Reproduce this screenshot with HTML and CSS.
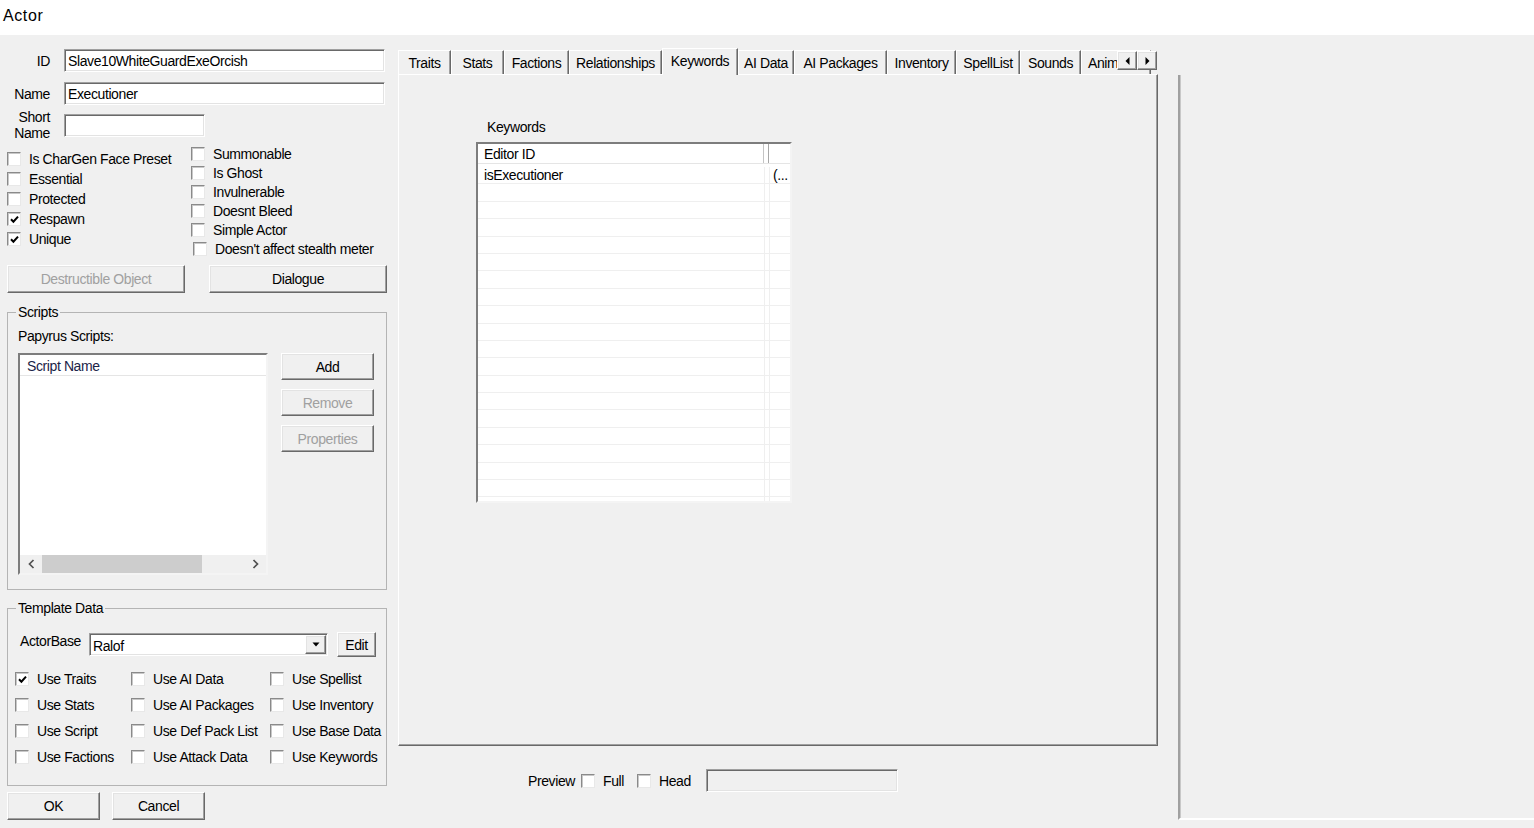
FILE: index.html
```html
<!DOCTYPE html>
<html>
<head>
<meta charset="utf-8">
<title>Actor</title>
<link rel="stylesheet" href="styles.css">
</head>
<body>
<div class="titlebar">Actor</div>
<div class="window">
  <div class="left">
    <div class="frow r1"><span class="flabel">ID</span><div class="edit w321">Slave10WhiteGuardExeOrcish</div></div>
    <div class="frow r2"><span class="flabel">Name</span><div class="edit w321">Executioner</div></div>
    <div class="frow r3"><span class="flabel">Short<br>Name</span><div class="edit w141"></div></div>

    <div class="flags">
      <div class="fcol fcol1">
        <div class="cb"><span class="box"></span>Is CharGen Face Preset</div>
        <div class="cb"><span class="box"></span>Essential</div>
        <div class="cb"><span class="box"></span>Protected</div>
        <div class="cb"><span class="box"><svg width="9" height="9" viewBox="0 0 9 9"><path d="M1 4.3 L3.4 6.7 L8 1.6" fill="none" stroke="#000" stroke-width="2"/></svg></span>Respawn</div>
        <div class="cb"><span class="box"><svg width="9" height="9" viewBox="0 0 9 9"><path d="M1 4.3 L3.4 6.7 L8 1.6" fill="none" stroke="#000" stroke-width="2"/></svg></span>Unique</div>
      </div>
      <div class="fcol fcol2">
        <div class="cb"><span class="box"></span>Summonable</div>
        <div class="cb"><span class="box"></span>Is Ghost</div>
        <div class="cb"><span class="box"></span>Invulnerable</div>
        <div class="cb"><span class="box"></span>Doesnt Bleed</div>
        <div class="cb"><span class="box"></span>Simple Actor</div>
        <div class="cb shift2"><span class="box"></span>Doesn't affect stealth meter</div>
      </div>
    </div>

    <div class="btnrow">
      <div class="btn dis wbig">Destructible Object</div>
      <div class="btn wbig">Dialogue</div>
    </div>

    <fieldset class="group scripts">
      <legend>Scripts</legend>
      <div class="ptitle">Papyrus Scripts:</div>
      <div class="srow">
        <div class="sunken slist">
          <div class="lhead">Script Name</div>
          <div class="lbody"></div>
          <div class="hscroll">
            <span class="harr"><svg width="7" height="10" viewBox="0 0 7 10"><path d="M5.5 1 L1.5 5 L5.5 9" fill="none" stroke="#505050" stroke-width="1.7"/></svg></span>
            <span class="thumb"></span>
            <span class="hspace"></span>
            <span class="harr"><svg width="7" height="10" viewBox="0 0 7 10"><path d="M1.5 1 L5.5 5 L1.5 9" fill="none" stroke="#505050" stroke-width="1.7"/></svg></span>
          </div>
        </div>
        <div class="sbtns">
          <div class="btn">Add</div>
          <div class="btn dis">Remove</div>
          <div class="btn dis">Properties</div>
        </div>
      </div>
    </fieldset>

    <fieldset class="group tmpl">
      <legend>Template Data</legend>
      <div class="abrow">
        <span class="ablabel">ActorBase</span>
        <div class="edit combo"><span class="ctext">Ralof</span><span class="btn ddbtn"><svg width="8" height="5" viewBox="0 0 8 5"><path d="M0.5 0.5 H7.5 L4 4.5 Z" fill="#000"/></svg></span></div>
        <div class="btn editbtn">Edit</div>
      </div>
      <div class="tgrid">
        <div class="cb"><span class="box"><svg width="9" height="9" viewBox="0 0 9 9"><path d="M1 4.3 L3.4 6.7 L8 1.6" fill="none" stroke="#000" stroke-width="2"/></svg></span>Use Traits</div>
        <div class="cb"><span class="box"></span>Use AI Data</div>
        <div class="cb"><span class="box"></span>Use Spellist</div>
        <div class="cb"><span class="box"></span>Use Stats</div>
        <div class="cb"><span class="box"></span>Use AI Packages</div>
        <div class="cb"><span class="box"></span>Use Inventory</div>
        <div class="cb"><span class="box"></span>Use Script</div>
        <div class="cb"><span class="box"></span>Use Def Pack List</div>
        <div class="cb"><span class="box"></span>Use Base Data</div>
        <div class="cb"><span class="box"></span>Use Factions</div>
        <div class="cb"><span class="box"></span>Use Attack Data</div>
        <div class="cb"><span class="box"></span>Use Keywords</div>
      </div>
    </fieldset>

    <div class="okrow">
      <div class="btn okbtn">OK</div>
      <div class="btn okbtn cancel">Cancel</div>
    </div>
  </div>

  <div class="mid">
    <div class="tabstrip">
      <div class="tab t-traits">Traits</div>
      <div class="tab t-stats">Stats</div>
      <div class="tab t-factions">Factions</div>
      <div class="tab t-rel">Relationships</div>
      <div class="tab sel t-kw">Keywords</div>
      <div class="tab t-ai">AI Data</div>
      <div class="tab t-aip">AI Packages</div>
      <div class="tab t-inv">Inventory</div>
      <div class="tab t-spell">SpellList</div>
      <div class="tab t-sounds">Sounds</div>
      <div class="tab t-anim">Animation</div>
      <div class="tabarrows">
        <div class="btn tarr"><svg width="5" height="8" viewBox="0 0 5 8"><path d="M4.5 0 L0.5 4 L4.5 8 Z" fill="#000"/></svg></div>
        <div class="btn tarr"><svg width="5" height="8" viewBox="0 0 5 8"><path d="M0.5 0 L4.5 4 L0.5 8 Z" fill="#000"/></svg></div>
      </div>
    </div>
    <div class="panel">
      <div class="klabel">Keywords</div>
      <div class="sunken klist">
        <div class="khead"><span class="kh1">Editor ID</span><span class="kh2"></span><span class="kh3"></span></div>
        <div class="kbody">
          <div class="krow"><span class="kc1">isExecutioner</span><span class="kc2"></span><span class="kc3">(...</span></div>
          <div class="krow"><span class="kc1"></span><span class="kc2"></span><span class="kc3"></span></div>
          <div class="krow"><span class="kc1"></span><span class="kc2"></span><span class="kc3"></span></div>
          <div class="krow"><span class="kc1"></span><span class="kc2"></span><span class="kc3"></span></div>
          <div class="krow"><span class="kc1"></span><span class="kc2"></span><span class="kc3"></span></div>
          <div class="krow"><span class="kc1"></span><span class="kc2"></span><span class="kc3"></span></div>
          <div class="krow"><span class="kc1"></span><span class="kc2"></span><span class="kc3"></span></div>
          <div class="krow"><span class="kc1"></span><span class="kc2"></span><span class="kc3"></span></div>
          <div class="krow"><span class="kc1"></span><span class="kc2"></span><span class="kc3"></span></div>
          <div class="krow"><span class="kc1"></span><span class="kc2"></span><span class="kc3"></span></div>
          <div class="krow"><span class="kc1"></span><span class="kc2"></span><span class="kc3"></span></div>
          <div class="krow"><span class="kc1"></span><span class="kc2"></span><span class="kc3"></span></div>
          <div class="krow"><span class="kc1"></span><span class="kc2"></span><span class="kc3"></span></div>
          <div class="krow"><span class="kc1"></span><span class="kc2"></span><span class="kc3"></span></div>
          <div class="krow"><span class="kc1"></span><span class="kc2"></span><span class="kc3"></span></div>
          <div class="krow"><span class="kc1"></span><span class="kc2"></span><span class="kc3"></span></div>
          <div class="krow"><span class="kc1"></span><span class="kc2"></span><span class="kc3"></span></div>
          <div class="krow"><span class="kc1"></span><span class="kc2"></span><span class="kc3"></span></div>
          <div class="krow"><span class="kc1"></span><span class="kc2"></span><span class="kc3"></span></div>
          <div class="krow"><span class="kc1"></span><span class="kc2"></span><span class="kc3"></span></div>
        </div>
      </div>
    </div>
    <div class="prev">
      <span>Preview</span>
      <span class="box pbox1"></span>
      <span>Full</span>
      <span class="box pbox2"></span>
      <span>Head</span>
      <div class="edit pinput"></div>
    </div>
  </div>

  <div class="side"></div>
</div>
</body>
</html>
```

FILE: styles.css
```css
* { box-sizing: border-box; }
html, body { margin: 0; padding: 0; }
body {
  width: 1534px;
  height: 828px;
  overflow: hidden;
  background: #f0f0f0;
  font-family: "Liberation Sans", Arial, sans-serif;
  font-size: 14px;
  letter-spacing: -0.4px;
  color: #000;
}

.titlebar {
  height: 35px;
  background: #fff;
  padding: 7px 0 0 3px;
  font-size: 16px;
  line-height: 18px;
  letter-spacing: 0.6px;
}

.window { display: flex; height: 793px; }

/* ---------- left column ---------- */
.left { width: 380px; margin-left: 7px; padding-top: 14px; flex: none; }

.frow { display: flex; align-items: center; }
.r1 { height: 23px; }
.r2 { height: 23px; margin-top: 10px; }
.r3 { height: 32px; margin-top: 4px; }
.flabel { width: 43px; margin-right: 14px; text-align: right; line-height: 16px; }

.edit {
  height: 23px;
  background: #fff;
  border: 1px solid;
  border-color: #a0a0a0 #fff #fff #a0a0a0;
  box-shadow: inset 1px 1px 0 #696969, inset -1px -1px 0 #e3e3e3;
  padding: 0 3px;
  line-height: 22px;
  white-space: nowrap;
  overflow: hidden;
}
.w321 { width: 321px; }
.w141 { width: 141px; }

.flags { display: flex; margin-top: 3px; }
.fcol1 { width: 184px; padding-top: 5px; }
.fcol1 .cb { height: 20px; }
.fcol2 .cb { height: 19px; }
.cb { display: flex; align-items: center; white-space: nowrap; }
.shift2 { margin-left: 2px; }

.box {
  width: 14px;
  height: 14px;
  flex: none;
  margin-right: 8px;
  background: #fff;
  border: 1px solid;
  border-color: #8a8a8a #e8e8e8 #e8e8e8 #8a8a8a;
  box-shadow: inset 1px 1px 0 #c8c8c8;
  display: flex;
  align-items: center;
  justify-content: center;
}

.btn {
  height: 28px;
  display: flex;
  align-items: center;
  justify-content: center;
  background: #f0f0f0;
  border: 1px solid;
  border-color: #fff #696969 #696969 #fff;
  box-shadow: inset -1px -1px 0 #a0a0a0, inset 1px 1px 0 #e3e3e3;
  white-space: nowrap;
}
.btn.dis { color: #a0a0a0; }
.wbig { width: 178px; }
.btnrow { display: flex; justify-content: space-between; margin-top: 7px; }

.group {
  margin: 0;
  padding: 0;
  border: 1px solid #b4b4b4;
  width: 380px;
  min-width: 0;
}
.group legend { margin-left: 8px; padding: 0 2px; line-height: 16px; }
.scripts { margin-top: 11px; padding-bottom: 14px; }
.tmpl { margin-top: 10px; padding-bottom: 15px; }

.ptitle { margin: 8px 0 0 10px; line-height: 16px; }
.srow { display: flex; margin-top: 9px; }

.sunken {
  background: #fff;
  border: 2px solid;
  border-color: #7d7d7d #f4f4f4 #f4f4f4 #7d7d7d;
}
.slist { margin-left: 10px; width: 250px; height: 222px; display: flex; flex-direction: column; }
.lhead {
  height: 21px;
  line-height: 22px;
  padding-left: 7px;
  border-bottom: 1px solid #e5e5e5;
  color: #1c2448;
}
.lbody { flex: 1; }
.hscroll { height: 18px; background: #f0f0f0; display: flex; align-items: center; }
.harr { width: 22px; height: 18px; display: flex; align-items: center; justify-content: center; }
.thumb { width: 160px; height: 18px; background: #cdcdcd; }
.hspace { flex: 1; }

.sbtns { margin-left: 13px; width: 93px; display: flex; flex-direction: column; gap: 9px; }
.sbtns .btn { height: 27px; }

.abrow { display: flex; align-items: center; margin-top: 16px; height: 25px; }
.ablabel { align-self: flex-start; margin-left: 12px; width: 69px; line-height: 18px; }
.combo { width: 239px; display: flex; align-items: center; padding: 0 1px 0 3px; }
.ctext { flex: 1; padding-top: 2px; }
.ddbtn { width: 21px; height: 19px; }
.editbtn { width: 39px; height: 25px; margin-left: 9px; }

.tgrid {
  display: grid;
  grid-template-columns: 116px 139px 120px;
  grid-auto-rows: 26px;
  margin: 9px 0 0 7px;
}

.okrow { display: flex; margin-top: 6px; }
.okbtn { width: 93px; height: 28px; }
.cancel { margin-left: 12px; }

/* ---------- middle (tabs) ---------- */
.mid { width: 760px; margin-left: 11px; padding-top: 13px; flex: none; display: flex; flex-direction: column; }

.tabstrip {
  height: 27px;
  margin-bottom: -1px;
  position: relative;
  z-index: 1;
  display: flex;
  align-items: flex-start;
  overflow: hidden;
}
.tab {
  flex: none;
  height: 24px;
  margin-top: 2px;
  background: #f0f0f0;
  border-top: 1px solid #fff;
  border-left: 1px solid #fff;
  border-right: 1px solid #696969;
  box-shadow: inset -1px 0 0 #a0a0a0;
  text-align: center;
  line-height: 24px;
  white-space: nowrap;
  overflow: hidden;
}
.tab.sel { height: 27px; margin-top: 0; line-height: 24px; }
.t-traits { width: 53px; }
.t-stats { width: 53px; }
.t-factions { width: 65px; }
.t-rel { width: 93px; }
.t-kw { width: 76px; }
.t-ai { width: 56px; }
.t-aip { width: 93px; }
.t-inv { width: 69px; }
.t-spell { width: 64px; }
.t-sounds { width: 61px; }
.t-anim { width: 70px; text-align: left; padding-left: 6px; }

.tabarrows { position: absolute; left: 719px; top: 3px; display: flex; }
.tarr { width: 20px; height: 19px; }

.panel {
  height: 672px;
  background: #f0f0f0;
  border-top: 1px solid #fff;
  border-left: 1px solid #fff;
  border-right: 1px solid #696969;
  border-bottom: 1px solid #696969;
  box-shadow: inset -1px -1px 0 #a0a0a0;
  padding: 44px 0 0 77px;
}
.klabel { margin-left: 11px; line-height: 16px; }
.klist { margin-top: 7px; width: 316px; height: 361px; display: flex; flex-direction: column; overflow: hidden; }
.khead { height: 20px; display: flex; border-bottom: 1px solid #e5e5e5; flex: none; }
.kh1 { width: 286px; padding-left: 6px; line-height: 20px; border-right: 1px solid #c4c4c4; }
.kh2 { width: 5px; border-right: 1px solid #a8a8a8; }
.kh3 { flex: 1; }
.kbody { flex: 1; padding-top: 3px; overflow: hidden; }
.krow { height: 17.4px; display: flex; border-bottom: 1px solid #efefef; line-height: 17px; }
.kc1 { width: 287px; padding-left: 6px; border-right: 1px solid #efefef; }
.kc2 { width: 5px; border-right: 1px solid #efefef; }
.kc3 { flex: 1; padding-left: 3px; }

.prev { display: flex; align-items: center; margin-top: 23px; padding-left: 130px; height: 23px; }
.pbox1 { margin-left: 6px; }
.pbox2 { margin-left: 13px; }
.pinput { width: 192px; margin-left: 15px; background: #f0f0f0; }

/* ---------- right frame ---------- */
.side {
  flex: 1;
  margin-left: 20px;
  margin-top: 40px;
  height: 745px;
  border-left: 2px solid #a0a0a0;
  border-bottom: 2px solid #fff;
  box-shadow: inset 1px 0 0 #c8c8c8;
}
```
